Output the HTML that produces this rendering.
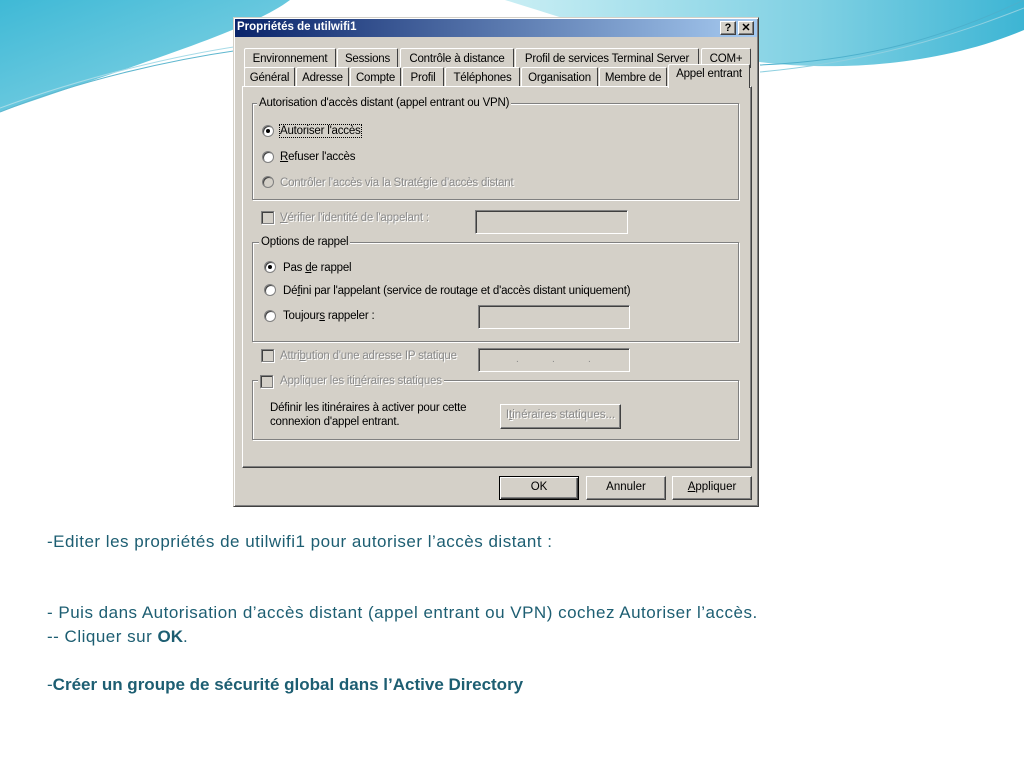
<!DOCTYPE html>
<html><head><meta charset="utf-8"><style>
*{margin:0;padding:0;box-sizing:border-box}
body{width:1024px;height:768px;position:relative;overflow:hidden;background:#fff;font-family:"Liberation Sans",sans-serif}
.a{position:absolute}
.w{font-size:11.5px;color:#000;white-space:nowrap;letter-spacing:-0.2px}
.dis{color:#8a8a8a;text-shadow:1px 1px 0 #fff}
.grp{position:absolute;border:1px solid #808080;box-shadow:1px 1px 0 #fff inset,1px 1px 0 #fff}
.leg{position:absolute;background:#d4d0c8;padding:0 2px;font-size:11.5px;white-space:nowrap;letter-spacing:-0.2px}
.rad{position:absolute;width:12px;height:12px;border-radius:50%;background:#fff;border:1px solid #808080;box-shadow:inset 1px 1px 0 #404040}
.rad.on::after{content:"";position:absolute;left:3px;top:3px;width:4px;height:4px;border-radius:50%;background:#000}
.rad.d{background:#d4d0c8}
.chk{position:absolute;width:13px;height:13px;background:#d4d0c8;border:1px solid #808080;box-shadow:inset 1px 1px 0 #404040,1px 1px 0 #fff}
.inp{position:absolute;border:1px solid;border-color:#808080 #fff #fff #808080;box-shadow:inset 1px 1px 0 #404040;background:#d4d0c8}
.btn{position:absolute;background:#d4d0c8;border:1px solid;border-color:#fff #404040 #404040 #fff;box-shadow:inset -1px -1px 0 #808080;font-size:11.5px;text-align:center;line-height:21px}
.tab{position:absolute;height:20px;font-size:11.5px;line-height:19px;text-align:center;border-left:1px solid #fff;border-top:1px solid #fff;border-right:1px solid #404040;border-radius:2px 2px 0 0;background:#d4d0c8;white-space:nowrap;letter-spacing:-0.2px}
.t{position:absolute;font-size:17px;color:#1d5e72;white-space:nowrap;letter-spacing:0.5px;font-family:"Liberation Sans",sans-serif}
.t b{letter-spacing:0}
</style></head><body>
<svg class="a" style="left:0;top:0" width="1024" height="130">
<defs>
<linearGradient id="g1" x1="0" y1="0" x2="1" y2="1"><stop offset="0" stop-color="#3fb9d6"/><stop offset="1" stop-color="#8ed6e6"/></linearGradient>
<linearGradient id="g2" x1="0" y1="0" x2="1" y2="0"><stop offset="0" stop-color="#c9eef4"/><stop offset="0.6" stop-color="#7fd0e3"/><stop offset="1" stop-color="#3db5d4"/></linearGradient>
</defs>
<path d="M0 0 L290 0 C250 30 150 60 0 112 Z" fill="url(#g1)"/>
<path d="M0 112 C80 80 170 60 240 50" stroke="#5fb7cf" fill="none"/>
<path d="M0 108 C90 75 180 55 240 46" stroke="#a7dbe8" fill="none"/>
<path d="M505 0 L1024 0 L1024 30 C930 70 820 70 760 62 C640 45 570 20 505 0 Z" fill="url(#g2)"/>
<path d="M760 65 C880 60 960 30 1024 0" stroke="#4db0cc" fill="none"/>
<path d="M760 72 C890 60 980 25 1024 8" stroke="#8fd0e0" fill="none"/>
</svg>

<div class="a" style="left:233px;top:17px;width:526px;height:490px;background:#d4d0c8;border:1px solid;border-color:#d4d0c8 #404040 #404040 #d4d0c8;box-shadow:inset 1px 1px 0 #fff,inset -1px -1px 0 #808080"></div>
<div class="a" style="left:235px;top:19px;width:522px;height:18px;background:linear-gradient(90deg,#0a246a,#a6caf0)"></div>
<div class="a" style="left:237px;top:21px;font-size:11.5px;font-weight:bold;color:#fff;font-family:'Liberation Sans',sans-serif">Propriétés de utilwifi1</div>
<div class="btn" style="left:720px;top:21px;width:16px;height:14px;line-height:12px;font-weight:bold;font-size:11px">?</div>
<div class="btn" style="left:738px;top:21px;width:16px;height:14px;line-height:12px;font-weight:bold;font-size:11px">✕</div>

<div class="tab" style="left:244px;top:48px;width:92px;line-height:21px">Environnement</div>
<div class="tab" style="left:337px;top:48px;width:61px;line-height:21px">Sessions</div>
<div class="tab" style="left:400px;top:48px;width:114px;line-height:21px">Contrôle à distance</div>
<div class="tab" style="left:515px;top:48px;width:184px;line-height:21px">Profil de services Terminal Server</div>
<div class="tab" style="left:701px;top:48px;width:50px;line-height:21px">COM+</div>
<div class="tab" style="left:244px;top:67px;width:51px;line-height:21px">Général</div>
<div class="tab" style="left:296px;top:67px;width:53px;line-height:21px">Adresse</div>
<div class="tab" style="left:350px;top:67px;width:51px;line-height:21px">Compte</div>
<div class="tab" style="left:402px;top:67px;width:42px;line-height:21px">Profil</div>
<div class="tab" style="left:445px;top:67px;width:75px;line-height:21px">Téléphones</div>
<div class="tab" style="left:521px;top:67px;width:77px;line-height:21px">Organisation</div>
<div class="tab" style="left:599px;top:67px;width:68px;line-height:21px">Membre de</div>
<div class="a" style="left:242px;top:86px;width:510px;height:382px;border:1px solid;border-color:#fff #404040 #404040 #fff;box-shadow:inset -1px -1px 0 #808080"></div>
<div class="tab" style="left:668px;top:64px;width:82px;height:24px;border-bottom:none;z-index:2">Appel entrant</div>

<div class="grp" style="left:252px;top:103px;width:487px;height:97px"></div>
<div class="leg" style="left:257px;top:97px">Autorisation d'accès distant (appel entrant ou VPN)</div>
<div class="rad on" style="left:262px;top:125px"></div>
<div class="w a" style="left:280px;top:125px;outline:1px dotted #000">Autoriser l'accès</div>
<div class="rad" style="left:262px;top:151px"></div>
<div class="w a" style="left:280px;top:151px"><u>R</u>efuser l'accès</div>
<div class="rad d" style="left:262px;top:176px"></div>
<div class="w a dis" style="left:280px;top:177px">Contrôler l'accès via la Stratégie d'accès distant</div>

<div class="chk" style="left:261px;top:211px"></div>
<div class="w a dis" style="left:280px;top:212px"><u>V</u>érifier l'identité de l'appelant :</div>
<div class="inp" style="left:475px;top:210px;width:153px;height:24px"></div>

<div class="grp" style="left:252px;top:242px;width:487px;height:100px"></div>
<div class="leg" style="left:259px;top:236px">Options de rappel</div>
<div class="rad on" style="left:264px;top:261px"></div>
<div class="w a" style="left:283px;top:262px">Pas <u>d</u>e rappel</div>
<div class="rad" style="left:264px;top:284px"></div>
<div class="w a" style="left:283px;top:285px">Dé<u>f</u>ini par l'appelant (service de routage et d'accès distant uniquement)</div>
<div class="rad" style="left:264px;top:310px"></div>
<div class="w a" style="left:283px;top:310px">Toujour<u>s</u> rappeler :</div>
<div class="inp" style="left:478px;top:305px;width:152px;height:24px"></div>

<div class="chk" style="left:261px;top:349px"></div>
<div class="w a dis" style="left:280px;top:350px">Attri<u>b</u>ution d'une adresse IP statique</div>
<div class="inp" style="left:478px;top:348px;width:152px;height:24px;font-size:10px;color:#888;letter-spacing:0"><span class="a" style="left:37px;top:5px">.</span><span class="a" style="left:73px;top:5px">.</span><span class="a" style="left:109px;top:5px">.</span></div>

<div class="grp" style="left:252px;top:380px;width:487px;height:60px"></div>
<div class="leg" style="left:258px;top:375px;padding-left:22px"><span class="dis">Appliquer les iti<u>n</u>éraires statiques</span></div>
<div class="chk" style="left:260px;top:375px"></div>
<div class="w a" style="left:270px;top:401px;line-height:14px">Définir les itinéraires à activer pour cette<br>connexion d'appel entrant.</div>
<div class="btn dis" style="left:500px;top:404px;width:121px;height:25px">I<u>t</u>inéraires statiques...</div>

<div class="btn" style="left:499px;top:476px;width:80px;height:24px;border:1px solid #000;box-shadow:inset 1px 1px 0 #fff,inset -1px -1px 0 #404040,inset -2px -2px 0 #808080">OK</div>
<div class="btn" style="left:586px;top:476px;width:80px;height:24px">Annuler</div>
<div class="btn" style="left:672px;top:476px;width:80px;height:24px"><u>A</u>ppliquer</div>

<div class="t" style="left:47px;top:532px">-Editer les propriétés de utilwifi1 pour autoriser l’accès distant :</div>
<div class="t" style="left:47px;top:603px">- Puis dans Autorisation d’accès distant (appel entrant ou VPN) cochez Autoriser l’accès.</div>
<div class="t" style="left:47px;top:627px">-- Cliquer sur <b>OK</b>.</div>
<div class="t" style="left:47px;top:675px;letter-spacing:0">-<b>Créer un groupe de sécurité global dans l’Active Directory</b></div>
</body></html>
